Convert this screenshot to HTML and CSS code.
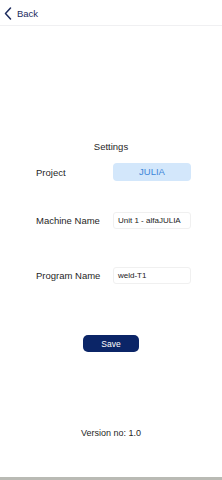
FILE: index.html
```html
<!DOCTYPE html>
<html>
<head>
    <title>Settings</title>
    <meta name="viewport" content="width=device-width, initial-scale=1.0">
    <link rel="stylesheet" href="styles.css">
</head>
<body>
    <div class="page">
        <!-- 顶部返回栏 -->
        <div class="header">
            <a class="back" href="#">
                <svg class="back-icon" width="8" height="13" viewBox="0 0 8 13">
                    <path d="M6.5 1 L1.5 6.5 L6.5 12" fill="none" stroke="#1c2b5e" stroke-width="1.5" stroke-linecap="round" stroke-linejoin="round"/>
                </svg>
                <span>Back</span>
            </a>
        </div>

        <!-- 设置内容 -->
        <div class="content">
            <div class="title">Settings</div>

            <div class="row row-project">
                <div class="label">Project</div>
                <div class="project-btn">JULIA</div>
            </div>

            <div class="row row-machine">
                <div class="label">Machine Name</div>
                <div class="field">Unit 1 - alfaJULIA</div>
            </div>

            <div class="row row-program">
                <div class="label">Program Name</div>
                <div class="field">weld-T1</div>
            </div>

            <button class="save-btn">Save</button>
        </div>

        <div class="version">Version no: 1.0</div>
        <div class="home-bar"></div>
    </div>
</body>
</html>
```

FILE: styles.css
```css
/* 全局样式 */
body {
    margin: 0;
    background-color: #fff;
    font-family: "Liberation Sans", Arial, sans-serif;
    color: #1f1f1f;
}

.page {
    height: 480px;
    display: flex;
    flex-direction: column;
}

/* 顶部返回栏 */
.header {
    height: 25px;
    border-bottom: 1px solid #f0f0f2;
    display: flex;
    align-items: center;
}
.back {
    display: flex;
    align-items: center;
    margin-left: 4px;
    margin-top: 1px;
    text-decoration: none;
    color: #1c2b5e;
    font-size: 9.5px;
}
.back-icon {
    margin-right: 5px;
}

/* 设置内容 */
.content {
    display: flex;
    flex-direction: column;
    align-items: center;
}
.title {
    margin-top: 114px;
    height: 14px;
    line-height: 14px;
    font-size: 9.5px;
}

.row {
    align-self: stretch;
    display: grid;
    grid-template-columns: 77px 78px;
    padding-left: 36px;
    align-items: center;
    height: 18px;
}
.row-project {
    margin-top: 9px;
}
.row-machine {
    margin-top: 31px;
    height: 17px;
}
.row-program {
    margin-top: 38px;
    height: 17px;
}
.label {
    font-size: 9.5px;
}

.project-btn {
    height: 18px;
    line-height: 18px;
    background: #d3e7fb;
    color: #3d86d8;
    border-radius: 4px;
    text-align: center;
    font-size: 9.5px;
}
.field {
    height: 15px;
    line-height: 15px;
    border: 1px solid #f0f0f0;
    border-radius: 3px;
    padding-left: 4px;
    font-size: 8px;
    color: #222;
}

.save-btn {
    margin-top: 51px;
    width: 56px;
    height: 17px;
    border: none;
    border-radius: 5px;
    background: #0b2567;
    color: #fff;
    font-family: "Liberation Sans", Arial, sans-serif;
    font-size: 8.5px;
    padding: 0;
}

.version {
    margin-top: auto;
    margin-bottom: 37px;
    text-align: center;
    height: 14px;
    line-height: 14px;
    font-size: 9px;
}

/* 底部灰条 */
.home-bar {
    height: 3px;
    background: #b9bab4;
}
```
